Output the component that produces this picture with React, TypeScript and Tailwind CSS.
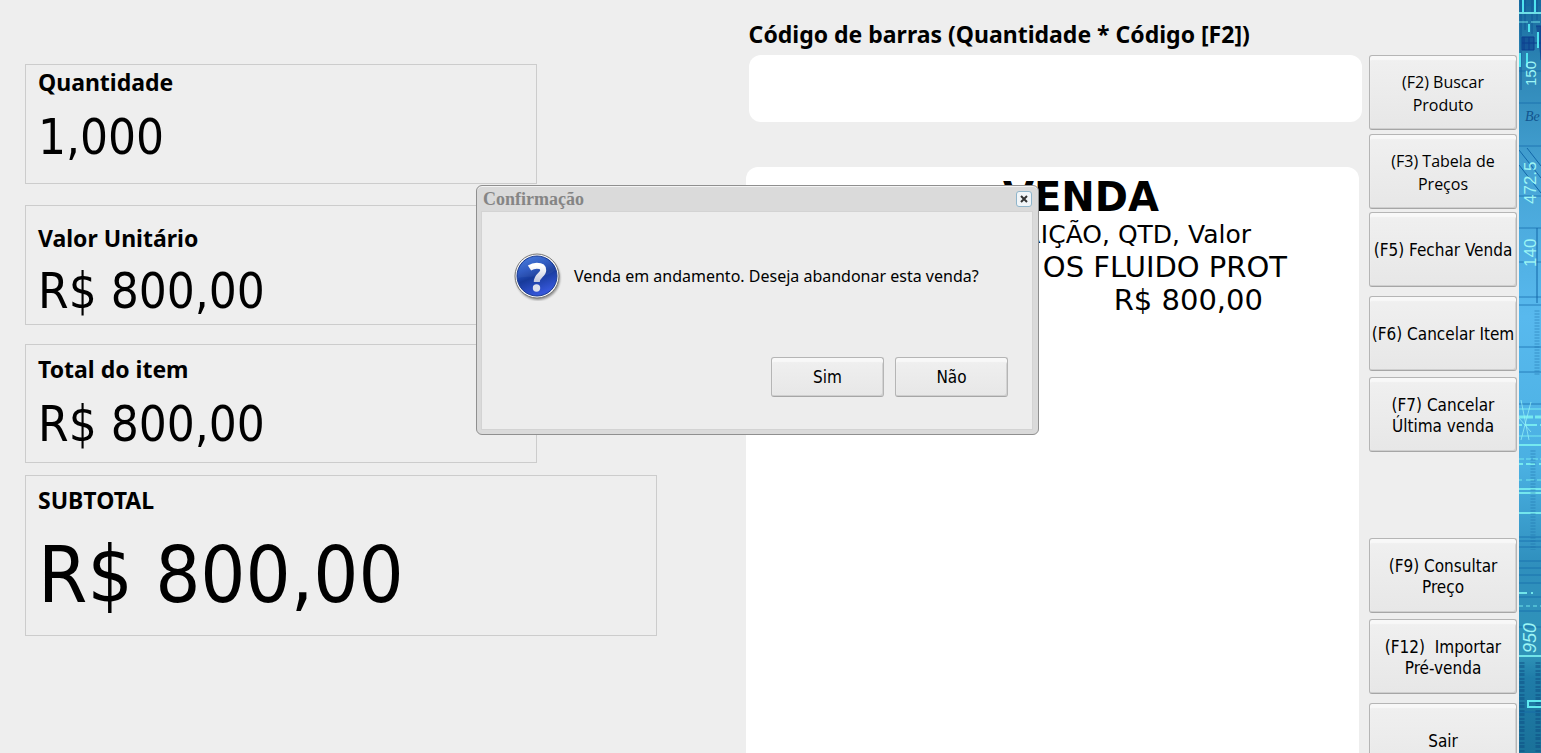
import { ReactNode } from 'react';

const valueFont = "font-['DejaVu_Sans_Condensed','DejaVu_Sans',sans-serif]";
const labelFont = "font-['Noto_Sans','Open_Sans',sans-serif]";

const totals = [
  { id: 'quantidade', label: 'Quantidade', value: '1,000', box: 'max-w-[512px] h-[120px] pt-px mb-[21px]', text: 'text-[49px] leading-[80px]' },
  { id: 'unitario', label: 'Valor Unitário', value: 'R$ 800,00', box: 'max-w-[512px] h-[120px] pt-4 mb-[19px]', text: 'text-[49px] leading-[76px]' },
  { id: 'total', label: 'Total do item', value: 'R$ 800,00', box: 'max-w-[512px] h-[119px] pt-2 mb-3', text: 'text-[49px] leading-[80px]' },
  { id: 'subtotal', label: 'SUBTOTAL', value: 'R$ 800,00', box: 'max-w-[632px] h-[161px] pt-2', text: 'text-[79px] leading-[118px]' },
];

const actions = [
  { label: '(F2) Buscar Produto', css: "font-['Open_Sans','Noto_Sans',sans-serif] text-[16px] leading-[23px] pt-0.5 px-6 mb-1" },
  { label: '(F3) Tabela de Preços', css: "font-['Open_Sans','Noto_Sans',sans-serif] text-[16px] leading-[23px] pt-0.5 px-4 mb-[3px]" },
  { label: '(F5) Fechar Venda', css: 'text-[17px] leading-[21px] pt-0.5 mb-[9px]' },
  { label: '(F6) Cancelar Item', css: 'text-[17px] leading-[21px] pt-0.5 mb-1.5' },
  { label: '(F7) Cancelar Última venda', css: 'text-[17px] leading-[21px] pt-0.5 px-4 mb-[86px]' },
  { label: '(F9) Consultar Preço', css: 'text-[17px] leading-[21px] pt-0.5 px-4 mb-1.5' },
  { label: '(F12)  Importar Pré-venda', css: 'text-[17px] leading-[21px] pt-0.5 px-3 mb-[9px] whitespace-pre-wrap' },
  { label: 'Sair', css: 'text-[17px] leading-[21px] pt-0.5' },
];

function GrayButton({ className, children }: { className: string; children: ReactNode }) {
  return (
    <button
      type="button"
      className={`shrink-0 rounded-[3px] border border-[#b5b5b5] border-b-[#a6a6a6] bg-linear-to-b from-[#f0f0f0] to-[#e7e7e7] text-black shadow-[inset_0_4px_1px_#f8f8f8,inset_-1px_-1px_0_#cfcfcf] ${className}`}
    >
      {children}
    </button>
  );
}

function QuestionIcon() {
  return (
    <svg className="w-[50px] h-[50px] shrink-0" viewBox="0 0 50 50" aria-hidden="true">
      <defs>
        <linearGradient id="ball" x1="0" y1="0" x2="0.4" y2="1">
          <stop offset="0" stopColor="#447de0" />
          <stop offset="0.4" stopColor="#2652bd" />
          <stop offset="0.6" stopColor="#173a9a" />
          <stop offset="1" stopColor="#3556d8" />
        </linearGradient>
        <linearGradient id="mark" x1="0" y1="0" x2="0" y2="1">
          <stop offset="0" stopColor="#ffffff" />
          <stop offset="1" stopColor="#c3c8dc" />
        </linearGradient>
        <filter id="soft"><feGaussianBlur stdDeviation="1" /></filter>
      </defs>
      <circle cx="26" cy="27" r="22" fill="#000" opacity="0.4" filter="url(#soft)" />
      <circle cx="25" cy="25" r="22" fill="#f6f6f6" stroke="#777" strokeWidth="1" />
      <circle cx="25" cy="25" r="20" fill="url(#ball)" stroke="#1c3d94" strokeWidth="1" />
      <path d="M6 27a19 19 0 0 1 37-8C35 28 18 24 6 27z" fill="#fff" opacity="0.05" />
      <path d="M17.500 17c2.500-1.600 5-2.200 7.300-2.200 4 0 6.400 1.300 6.400 4.400 0 4.800-6.400 5-6.400 11.800" fill="none" stroke="url(#mark)" strokeWidth="6" />
      <circle cx="24.500" cy="37" r="3.700" fill="#dde0ec" />
    </svg>
  );
}

function BlueprintStrip() {
  const dark = [5, 71, 103, 146, 196, 228, 262, 297, 305, 347, 372, 404, 537, 541, 547, 561, 568, 575, 583, 597, 611, 627, 712];
  const light = [
    { y: 13, w: 2, dash: '' },
    { y: 22, w: 1, dash: '9 3' },
    { y: 409, w: 1, dash: '' },
    { y: 417, w: 3, dash: '14 2' },
    { y: 425, w: 2, dash: '3 3 12' },
    { y: 436, w: 1, dash: '' },
    { y: 445, w: 2, dash: '' },
    { y: 459, w: 1, dash: '5 2' },
    { y: 464, w: 2, dash: '4 3 9' },
    { y: 480, w: 1, dash: '3 4 8' },
    { y: 489, w: 2, dash: '' },
    { y: 493, w: 2, dash: '' },
    { y: 513, w: 2, dash: '' },
    { y: 593, w: 2, dash: '8 4 2' },
    { y: 606, w: 1, dash: '4 3' },
    { y: 656, w: 2, dash: '' },
  ];
  return (
    <svg className="w-[22px] h-full shrink-0" viewBox="0 0 22 753" preserveAspectRatio="xMidYMin slice" aria-hidden="true">
      <defs>
        <linearGradient id="strip" x1="0" y1="0" x2="0" y2="1">
          <stop offset="0" stopColor="#176a9e" />
          <stop offset="0.1" stopColor="#3089b8" />
          <stop offset="0.25" stopColor="#48a6d8" />
          <stop offset="0.42" stopColor="#58b9ee" />
          <stop offset="0.62" stopColor="#4ab0e2" />
          <stop offset="0.75" stopColor="#2f8fbd" />
          <stop offset="0.87" stopColor="#2f93b8" />
          <stop offset="0.9" stopColor="#1f7ca8" />
          <stop offset="1" stopColor="#1a7199" />
        </linearGradient>
      </defs>
      <rect width="22" height="753" fill="url(#strip)" />
      <path d="M3 37h12v13H3zM5 37v13M10 37v13M3 43h19M17 26h5v34" fill="#0c3f8e" fillOpacity="0.6" stroke="#0c3f8e" />
      <path d="M2 0v90M6 0v30M13 0v34M18 0v20" stroke="#0d4f94" opacity="0.7" />
      {dark.map((y) => <path key={y} d={`M0 ${y}h22`} stroke="#1267a8" strokeWidth="1" opacity="0.7" />)}
      {light.map((l) => <path key={l.y} d={`M0 ${l.y}h22`} stroke="#7df3f2" strokeWidth={l.w} strokeDasharray={l.dash} opacity="0.85" />)}
      <path d="M1 67V53M8 67V53M4 0v12M16 0v12M10 24v8M19 32v16" fill="none" stroke="#4fe3ee" strokeWidth="2" />
      <path d="M0 150l22 28M0 165l22 28M8 148l14 18M18 228v75" fill="none" stroke="#1267a8" />
      <path d="M2 400l8 40M12 402l-10 38M0 418l12 14" fill="none" stroke="#9af3f8" opacity="0.7" />
      <path d="M14 450v100M18 310v66" fill="none" stroke="#176ca8" strokeDasharray="2 1" strokeWidth="5" opacity="0.25" />
      <path d="M3 662v91M19 662v91" fill="none" stroke="#0b4a80" strokeDasharray="2 1 3 2" strokeWidth="5" opacity="0.45" />
      <path d="M22 701H9v6h13" fill="none" stroke="#5fe9ef" strokeWidth="2" />
      <g fill="#9df5f5" fontFamily="Liberation Sans" fontSize="17">
        <text transform="translate(17 86) rotate(-90)" fontSize="15">150</text>
        <text transform="translate(17 204) rotate(-90)">472.5</text>
        <text transform="translate(17 267) rotate(-90)">140</text>
        <text transform="translate(17 653) rotate(-90)" fontSize="18" fontStyle="italic">950</text>
      </g>
      <text x="6" y="121" fontFamily="Liberation Serif" fontSize="14" fontStyle="italic" fill="#12558f">Be</text>
    </svg>
  );
}

function ConfirmDialog() {
  return (
    <div
      role="dialog"
      aria-labelledby="dialog-title"
      className="flex flex-col w-[563px] h-[250px] rounded-[6px] border border-[#8f8f8f] bg-[#dadada] pl-1 pr-[5px] pb-1 shadow-[inset_0_1px_0_#f4f4f4]"
    >
      <div className="flex items-center justify-between h-[25px] pl-0.5 pr-px">
        <h2 id="dialog-title" className="font-['Liberation_Serif',serif] font-bold text-[18px] leading-[24px] text-[#858585]">Confirmação</h2>
        <button type="button" aria-label="Fechar" className="flex items-center justify-center w-4 h-4 rounded-[3px] border border-[#8fb5cb] bg-[#f1f5f8]">
          <svg className="w-2 h-2" viewBox="0 0 8 8"><path d="M1 1l6 6M7 1l-6 6" stroke="#333" strokeWidth="2" /></svg>
        </button>
      </div>
      <div className="flex flex-col flex-1 border border-[#d3d3d3] bg-[#ededed] pl-[26px] pr-6">
        <div className="flex items-center gap-3 pt-[39px] pl-1">
          <QuestionIcon />
          <p className={`${labelFont} text-[16px] leading-[24px]`}>Venda em andamento. Deseja abandonar esta venda?</p>
        </div>
        <div className="flex justify-end gap-[11px] pt-14">
          <GrayButton className={`${valueFont} w-[113px] h-10 pt-0.5 text-[17px]`}>Sim</GrayButton>
          <GrayButton className={`${valueFont} w-[113px] h-10 pt-0.5 text-[17px]`}>Não</GrayButton>
        </div>
      </div>
    </div>
  );
}

export default function App() {
  return (
    <div className="relative flex h-screen overflow-hidden bg-[#eeeeee] text-black">
      <section className="flex-1 min-w-0 pl-[25px] pr-4 pt-16">
        {totals.map((t) => (
          <div key={t.id} className={`border border-[#cccccc] px-3 ${t.box}`}>
            <h3 className={`${labelFont} font-bold text-[23px] leading-[32px]`}>{t.label}</h3>
            <p className={`${valueFont} whitespace-nowrap ${t.text}`}>{t.value}</p>
          </div>
        ))}
      </section>

      <section className="flex flex-col w-[40%] shrink-0 pt-[18px]">
        <label htmlFor="codigo" className={`${labelFont} font-bold text-[23px] leading-[32px] mb-[5px] pl-[3px] whitespace-nowrap`}>
          Código de barras (Quantidade * Código [F2])
        </label>
        <input id="codigo" type="text" className="h-[67px] shrink-0 ml-[3px] px-4 rounded-[12px] bg-white text-[32px] outline-none" />
        <div className="flex-1 mt-[45px] mr-[3px] pt-2 rounded-t-[12px] bg-white text-right font-['DejaVu_Sans',sans-serif] whitespace-nowrap">
          <h2 className="pr-[200px] font-bold text-[40px] leading-[44px]">VENDA</h2>
          <p className="pr-[108px] text-[25px] leading-[32px]">DESCRIÇÃO, QTD, Valor</p>
          <p className="pr-[72px] text-[29px] leading-[32px]">OS FLUIDO PROT</p>
          <p className="pr-24 text-[29px] leading-[34px]">R$ 800,00</p>
        </div>
      </section>

      <nav className={`${valueFont} flex flex-col w-[148px] shrink-0 ml-[7px] mr-0.5 pt-[55px]`}>
        {actions.map((a) => (
          <GrayButton key={a.label} className={`h-[75px] ${a.css}`}>{a.label}</GrayButton>
        ))}
      </nav>
      <BlueprintStrip />

      <div className="absolute inset-x-0 top-[185px] flex justify-center pr-[26px]">
        <ConfirmDialog />
      </div>
    </div>
  );
}
